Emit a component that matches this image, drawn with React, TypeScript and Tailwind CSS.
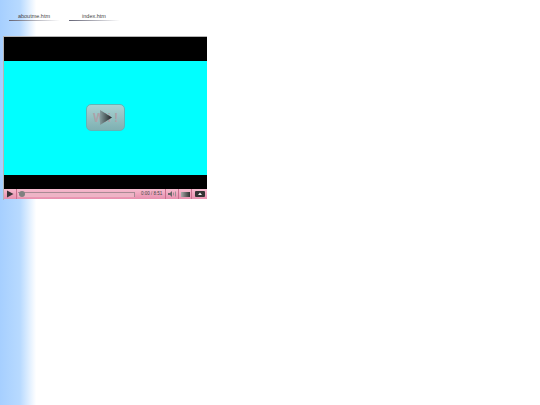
const Play = () => (
  <svg width="8" height="8" viewBox="0 0 8 8">
    <path d="M1 0.5 L7.5 4 L1 7.5 Z" fill="#3a3438" />
  </svg>
);

const NavLink = ({ label }: { label: string }) => (
  <div className="h-[10px] w-[51px] bg-gradient-to-r from-[#667] to-white bg-[length:100%_1px] bg-bottom bg-no-repeat pr-[1px] text-center font-['Liberation_Sans',sans-serif] text-[5.5px] leading-[10px] text-[#444]">
    {label}
  </div>
);

export default function App() {
  return (
    <div className="h-[405px] w-[540px] overflow-hidden bg-white bg-gradient-to-r from-[#a6cfff] from-0% via-[#b8daff] via-[3.7%] to-white to-[6.7%] pl-[3px]">
      <div className="flex gap-[9px] pl-[6px] pt-[11px]">
        <NavLink label="aboutme.htm" />
        <NavLink label="index.htm" />
      </div>

      <div className="mt-[15px] flex h-[164px] w-[204px] flex-col border-t border-l border-[#b5b5b5]">
        <div className="h-[24px] bg-black" />
        <div className="relative h-[114px] bg-[#00ffff]">
          <div className="absolute left-[82px] top-[43px] flex h-[27px] w-[39px] items-center justify-center overflow-hidden rounded-[5px] border border-[#62b4b6] bg-gradient-to-b from-[#a8d2d2] to-[#7fb0b2]">
            <span className="absolute whitespace-nowrap font-['Liberation_Sans',sans-serif] text-[12px] font-bold text-[#aca2a8]">Wii !</span>
            <svg className="relative" width="13" height="15" viewBox="0 0 13 15">
              <defs>
                <linearGradient id="tri" x1="0" x2="1" y1="0" y2="0">
                  <stop offset="0" stopColor="#849c9e" />
                  <stop offset="1" stopColor="#1d2224" />
                </linearGradient>
              </defs>
              <path d="M1 0 L13 7.5 L1 15 Z" fill="url(#tri)" />
            </svg>
          </div>
        </div>
        <div className="h-[14px] bg-black" />
        <div className="flex h-[10px] items-center bg-gradient-to-b from-[#f6bccf] to-[#e88fae]">
          <div className="flex h-full w-[13px] items-center justify-center border-r border-[#c9708e]">
            <Play />
          </div>
          <div className="relative ml-[1px] h-[5px] w-[117px] border-t border-r border-[#a98a94] bg-[#eeb4c6]">
            <div className="absolute left-[1px] top-[-2px] h-[6px] w-[6px] rounded-full bg-[#808080]" />
          </div>
          <span className="ml-[6px] w-[24px] whitespace-nowrap font-['Liberation_Sans',sans-serif] text-[4.5px] leading-none text-[#444]">0:00 / 8:51</span>
          <div className="flex h-full w-[14px] items-center justify-center border-x border-[#c9708e]">
            <svg width="9" height="6" viewBox="0 0 9 6">
              <path d="M0 2 H2 L4 0 V6 L2 4 H0 Z" fill="#666" />
              <path d="M5.5 1.5 V4.5 M7.5 0.5 V5.5" stroke="#888" strokeWidth="0.8" />
            </svg>
          </div>
          <div className="flex h-full w-[13px] items-center justify-center border-r border-[#c9708e]">
            <div className="h-[5px] w-[9px] bg-gradient-to-r from-[#aaa] to-[#333]" />
          </div>
          <div className="flex h-full flex-1 items-center justify-center">
            <svg width="10" height="6" viewBox="0 0 10 6">
              <rect width="10" height="6" rx="1" fill="#333" />
              <path d="M3 4 L5 1.5 L7 4 Z" fill="#eee" />
            </svg>
          </div>
        </div>
      </div>
    </div>
  );
}
